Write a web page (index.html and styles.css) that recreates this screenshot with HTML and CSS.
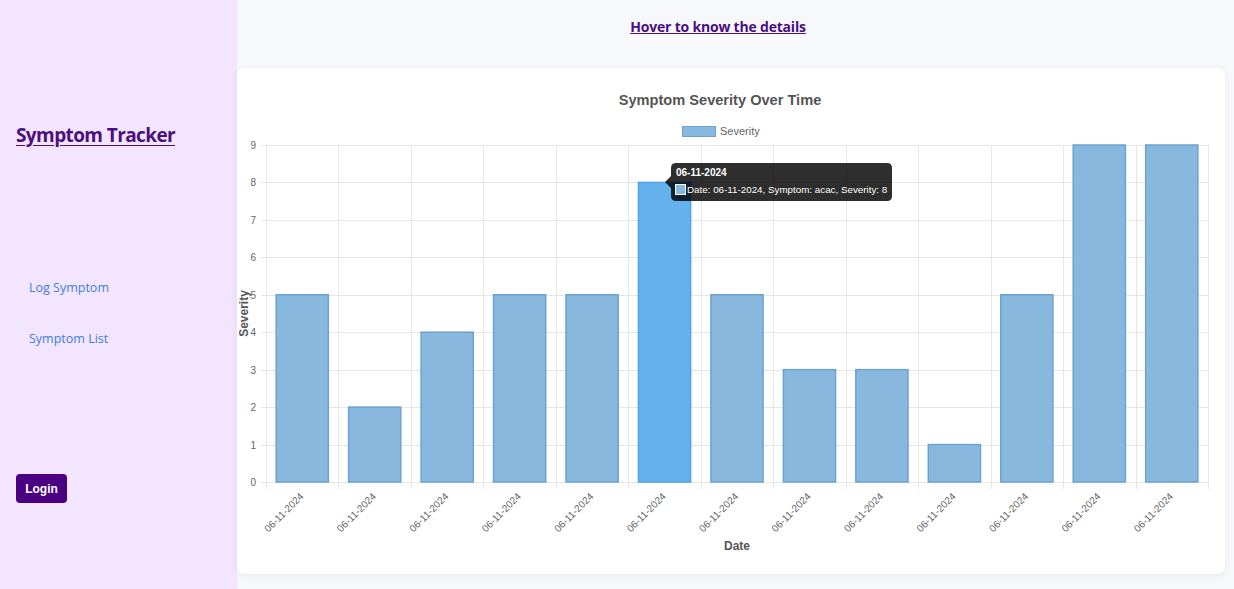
FILE: index.html
```html
<!DOCTYPE html>
<html lang="en">
<head>
<meta charset="utf-8">
<title>Symptom Tracker</title>
<link rel="stylesheet" href="styles.css">
</head>
<body>
<div class="app">
  <aside class="sidebar">
    <h1 class="brand"><a href="#">Symptom Tracker</a></h1>
    <nav class="nav">
      <a href="#" class="nav-link">Log Symptom</a>
      <a href="#" class="nav-link">Symptom List</a>
    </nav>
    <button class="login">Login</button>
  </aside>
  <main class="main">
    <div class="hint"><a href="#">Hover to know the details</a></div>
    <section class="card">
      <svg class="chart" width="988" height="506" viewBox="0 0 988 506" xmlns="http://www.w3.org/2000/svg">
        <text x="483" y="37" class="t-title" text-anchor="middle">Symptom Severity Over Time</text>
        <rect x="445.5" y="58.5" width="33" height="10" fill="#89b8de" stroke="#6aa3d1" stroke-width="1"/>
        <text x="483" y="67" class="t-legend">Severity</text>
        <g id="grid" stroke="#e6e6e6" stroke-width="1"></g>
        <g id="ylabels" class="t-tick"></g>
        <g id="bars"></g>
        <g id="xlabels" class="t-tick"></g>
        <text x="500" y="482" class="t-axis" text-anchor="middle">Date</text>
        <text transform="translate(11,245.5) rotate(-90)" class="t-axis" text-anchor="middle">Severity</text>
        <g class="tooltip">
          <path d="M439 95 H650 Q655 95 655 100 V128 Q655 133 650 133 H439 Q434 133 434 128 V120 L428 114 L434 108 V100 Q434 95 439 95 Z" fill="rgba(0,0,0,0.82)"/>
          <text x="439" y="108" class="t-tip-title">06-11-2024</text>
          <rect x="438.5" y="116.5" width="10" height="10" fill="#89b8de" stroke="#ffffff" stroke-width="1"/>
          <text x="450" y="125" class="t-tip">Date: 06-11-2024, Symptom: acac, Severity: 8</text>
        </g>
      </svg>
    </section>
  </main>
</div>
<script>
(function(){
  var ns="http://www.w3.org/2000/svg";
  var data=[5,2,4,5,5,8,5,3,3,1,5,9,9];
  var L=29,R=971,T=77,B=414,unit=(B-T)/9,cw=(R-L)/13,bw=cw*0.72;
  var grid=document.getElementById('grid'),yl=document.getElementById('ylabels'),
      bars=document.getElementById('bars'),xl=document.getElementById('xlabels');
  function el(n,a,p){var e=document.createElementNS(ns,n);for(var k in a)e.setAttribute(k,a[k]);p.appendChild(e);return e;}
  for(var v=0;v<=9;v++){
    var y=Math.round(B-v*unit)+0.5;
    el('line',{x1:L-5,x2:R,y1:y,y2:y},grid);
    var t=el('text',{x:19,y:y+3.5,'text-anchor':'end'},yl);t.textContent=v;
  }
  for(var i=0;i<=13;i++){
    var x=Math.round(L+i*cw)+0.5;
    el('line',{x1:x,x2:x,y1:T,y2:B+7},grid);
  }
  for(var j=0;j<data.length;j++){
    var cx=L+cw*(j+0.5),top=B-data[j]*unit;
    var hov=(j===5);
    el('rect',{x:cx-bw/2,y:top,width:bw,height:B-top,fill:hov?'#63b2ee':'#89b8de',stroke:hov?'#4fa3e6':'#6aa3d1','stroke-width':1.5},bars);
    var lt=el('text',{'text-anchor':'end',transform:'translate('+(cx+2)+','+(B+15)+') rotate(-45)'},xl);
    lt.textContent='06-11-2024';
  }
})();
</script>
</body>
</html>
```
FILE: styles.css
```css
html, body {
  margin: 0;
  padding: 0;
  height: 100%;
}
body {
  background: #f7f8fb;
  font-family: "Open Sans", "Noto Sans", sans-serif;
}
.app {
  display: flex;
  height: 589px;
}
.sidebar {
  width: 237px;
  flex: none;
  background: #f3e5ff;
  box-sizing: border-box;
  padding: 0 16px;
  display: flex;
  flex-direction: column;
}
.brand {
  margin: 120px 0 0 0;
  font-size: 19px;
  font-weight: 700;
  letter-spacing: -0.6px;
  line-height: 30px;
}
.brand a {
  color: #4b0f80;
  text-decoration: underline;
  text-underline-offset: 3px;
}
.nav {
  display: flex;
  flex-direction: column;
  gap: 32px;
  margin-top: 128px;
  padding-left: 13px;
}
.nav-link {
  color: #3f7fdb;
  text-decoration: none;
  font-size: 12.5px;
  line-height: 19px;
}
.login {
  margin-top: 126px;
  align-self: flex-start;
  width: 51px;
  height: 29px;
  background: #4b0082;
  color: #ffffff;
  border: none;
  border-radius: 4px;
  font-family: "Liberation Sans", Arial, sans-serif;
  font-size: 12px;
  font-weight: 700;
  padding: 0;
}
.main {
  flex: 1;
  display: flex;
  flex-direction: column;
  padding-right: 9px;
}
.hint {
  text-align: center;
  padding: 16px 26px 0 0;
  height: 52px;
  box-sizing: border-box;
  font-size: 14px;
  font-weight: 700;
  letter-spacing: -0.2px;
  line-height: 22px;
}
.hint a {
  color: #4b0f80;
  text-decoration: underline;
}
.card {
  background: #ffffff;
  border-radius: 8px;
  box-shadow: 0 2px 10px rgba(0, 0, 0, 0.06);
  width: 988px;
  height: 506px;
  margin-top: 16px;
  overflow: hidden;
}
.chart {
  display: block;
  font-family: "Liberation Sans", Arial, sans-serif;
}
.t-title {
  font-size: 14.6px;
  font-weight: 700;
  fill: #555555;
}
.t-legend {
  font-size: 11px;
  fill: #666666;
}
.t-tick {
  font-size: 10px;
  fill: #666666;
}
.t-axis {
  font-size: 12px;
  font-weight: 700;
  fill: #555555;
}
.t-tip-title {
  font-size: 10px;
  font-weight: 700;
  fill: #ffffff;
}
.t-tip {
  font-size: 9.8px;
  fill: #ffffff;
}
```
